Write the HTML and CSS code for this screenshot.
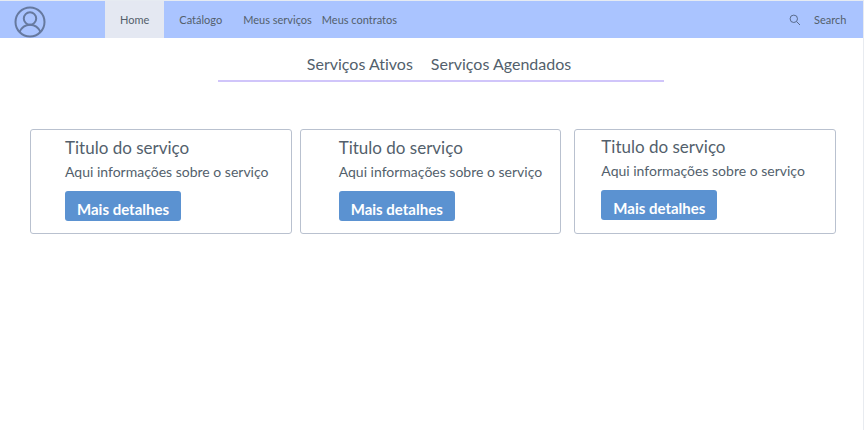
FILE: index.html
```html
<!DOCTYPE html>
<html lang="pt-BR">
<head>
<meta charset="utf-8">
<meta name="viewport" content="width=device-width, initial-scale=1">
<title>Serviços</title>
<link rel="stylesheet" href="styles.css">
</head>
<body>
<header class="topbar">
  <a class="profile" href="#" aria-label="Perfil">
    <svg class="profile-icon" viewBox="0 0 32 32" aria-hidden="true">
      <circle cx="16" cy="16" r="14.5"/>
      <circle cx="16" cy="12.5" r="6.2"/>
      <path d="M5.6 26C7.5 21.500 11.200 18.700 16 18.700S24.500 21.500 26.400 26"/>
    </svg>
  </a>
  <nav class="menu">
    <a class="menu-link active" href="#">Home</a>
    <a class="menu-link catalog" href="#">Catálogo</a>
    <a class="menu-link compact" href="#">Meus serviços</a>
    <a class="menu-link compact" href="#">Meus contratos</a>
  </nav>
  <form class="search">
    <label for="search" aria-label="Search">
      <svg class="search-icon" viewBox="0 0 12 12" aria-hidden="true">
        <circle cx="4.800" cy="4.800" r="3.700"/>
        <path d="M7.600 7.600L11 11"/>
      </svg>
    </label>
    <input id="search" class="search-input" type="text" placeholder="Search">
  </form>
</header>
<main class="page">
  <nav class="tabs">
    <a class="tab" href="#">Serviços Ativos</a>
    <a class="tab" href="#">Serviços Agendados</a>
  </nav>
  <section class="cards">
    <article class="card first">
      <h2 class="card-title">Titulo do serviço</h2>
      <p class="card-text">Aqui informações sobre o serviço</p>
      <button class="card-button" type="button">Mais detalhes</button>
    </article>
    <article class="card second">
      <h2 class="card-title">Titulo do serviço</h2>
      <p class="card-text">Aqui informações sobre o serviço</p>
      <button class="card-button" type="button">Mais detalhes</button>
    </article>
    <article class="card third">
      <h2 class="card-title">Titulo do serviço</h2>
      <p class="card-text">Aqui informações sobre o serviço</p>
      <button class="card-button" type="button">Mais detalhes</button>
    </article>
  </section>
</main>
</body>
</html>
```

FILE: styles.css
```css
* {
  box-sizing: border-box;
}

body {
  margin: 0;
  min-height: 100vh;
  border-top: 1px solid #e6ebf2;
  border-right: 1px solid #e8ebf0;
  background: #fff;
  color: #535f6c;
  font-family: Lato, sans-serif;
  font-variant-ligatures: none;
}

a {
  color: inherit;
  text-decoration: none;
}

.topbar {
  display: flex;
  height: 37px;
  background: #aac4ff;
}

.profile {
  display: flex;
  align-items: center;
  width: 105px;
  padding: 4px 0 0 14px;
}

.profile-icon {
  width: 32px;
  height: 32px;
  fill: none;
  stroke: #66799f;
  stroke-width: 2;
}

.menu {
  display: flex;
  font-size: 11px;
}

.menu-link {
  display: flex;
  align-items: center;
  padding: 0 15px;
}

.menu-link.active {
  background: #e4e8f2;
}

.menu-link.catalog {
  padding-right: 16px;
}

.menu-link.compact {
  padding: 0 5px;
}

.search {
  display: flex;
  align-items: center;
  gap: 13px;
  margin-left: auto;
}

.search-icon {
  display: block;
  width: 12px;
  height: 12px;
  fill: none;
  stroke: #596b8c;
  stroke-width: 1;
}

.search-input {
  width: 49px;
  padding: 0;
  border: 0;
  outline: 0;
  background: transparent;
  color: #535f6c;
  font: 11px Lato, sans-serif;
}

.search-input::placeholder {
  color: #535f6c;
}

.tabs {
  display: flex;
  justify-content: center;
  gap: 18px;
  width: 52%;
  max-width: 446px;
  margin: 0 0 0 218px;
  padding: 14px 4px 4px 0;
  border-bottom: 2px solid #d0c5fa;
  font-size: 16px;
  line-height: 24px;
}

.cards {
  display: flex;
  align-items: stretch;
  gap: 8px;
  padding: 47px 27px 0 30px;
}

.card {
  flex: 1 1 240px;
  min-width: 0;
  padding: 7px 0 12px 34px;
  border: 1px solid #b9c1cf;
  border-radius: 3px;
}

.card.second {
  padding-left: 38px;
}

.card.third {
  margin-left: 5px;
  padding-top: 6px;
  padding-left: 26px;
}

.card-title {
  margin: 0;
  font-size: 17px;
  font-weight: 400;
  line-height: 22px;
}

.card-text {
  margin: 0;
  font-size: 14px;
  line-height: 25px;
  white-space: nowrap;
}

.card-button {
  display: block;
  margin: 7px 0 0;
  padding: 6px 12px 0;
  border: 0;
  border-radius: 3px;
  background: #5b92d1;
  color: #fff;
  font: 700 15px/24px Lato, sans-serif;
}
```
